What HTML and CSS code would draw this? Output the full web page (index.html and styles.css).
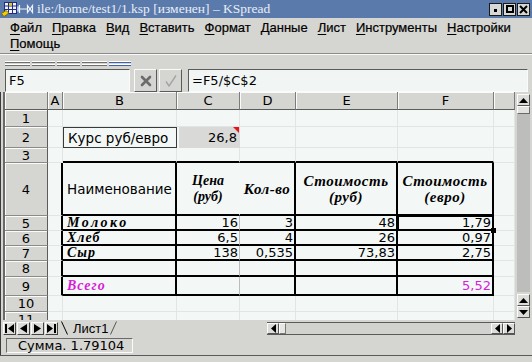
FILE: index.html
```html
<!DOCTYPE html>
<html>
<head>
<meta charset="utf-8">
<title>KSpread</title>
<link rel="stylesheet" href="styles.css">
</head>
<body>
<div class="win">
  <div class="titlebar">
    <svg class="ticon" width="16" height="16" viewBox="0 0 16 16">
      <rect x="3.5" y="1.5" width="12" height="11" fill="#f4f4f4" stroke="#1c2c8c"/>
      <path d="M3.5 5h12M3.5 8.5h12M7.5 1.5v11M11.5 1.5v11" stroke="#1c2c8c" fill="none"/>
      <rect x="8" y="2" width="3" height="2.5" fill="#f0c800"/>
      <path d="M0.5 12.5 L5 9.5 L8 12 L3 15.5 Z" fill="#f0d000" stroke="#7a5a00" stroke-width="0.8"/>
    </svg>
    <svg class="tpin" width="17" height="16" viewBox="0 0 17 16">
      <path d="M2.5 4v8M1 5.5v5M2.5 8h8" stroke="#f0f4fa" stroke-width="1.2" fill="none"/>
      <path d="M10.5 4.5 L15.5 11.5 L15.5 4.5 L10.5 11.5 Z" stroke="#f0f4fa" stroke-width="1.2" fill="none"/>
    </svg>
    <div class="ttext">ile:/home/test1/1.ksp [изменен] – KSpread</div>
    <div class="tbtns">
      <span class="tb"><span class="mini"></span></span>
      <span class="tb"><span class="maxi"></span></span>
      <span class="tb">
        <svg width="9" height="9" viewBox="0 0 9 9"><path d="M1 1L8 8M8 1L1 8" stroke="#000" stroke-width="2"/></svg>
      </span>
    </div>
  </div>

  <div class="menubar">
    <span><u>Ф</u>айл</span>
    <span><u>П</u>равка</span>
    <span><u>В</u>ид</span>
    <span><u>В</u>ставить</span>
    <span><u>Ф</u>ормат</span>
    <span><u>Д</u>анные</span>
    <span><u>Л</u>ист</span>
    <span><u>И</u>нструменты</span>
    <span><u>Н</u>астройки</span>
    <span class="brk"></span>
    <span><u>П</u>омощь</span>
  </div>
  <div class="sep"></div>

  <div class="handles">
    <div class="h w25"></div>
    <div class="h w23"></div>
    <div class="h w23"></div>
    <div class="h w25"></div>
    <div class="h w22 blue"></div>
  </div>

  <div class="formula">
    <div class="namebox">F5</div>
    <div class="fbtn">
      <svg width="14" height="14" viewBox="0 0 14 14"><path d="M3 3L11 11M11 3L3 11" stroke="#6c6c6c" stroke-width="2.6" stroke-linecap="round"/></svg>
    </div>
    <div class="fbtn">
      <svg width="14" height="14" viewBox="0 0 14 14"><path d="M2 7.5L5 12L12 1.5" stroke="#a4a4a4" stroke-width="1.4" fill="none"/></svg>
    </div>
    <div class="fedit">=F5/$C$2</div>
  </div>

  <div class="sheetwrap">
    <div class="sheet">
      <div class="ch"></div><div class="ch">A</div><div class="ch">B</div><div class="ch">C</div><div class="ch">D</div><div class="ch">E</div><div class="ch">F</div><div class="ch"></div>

      <div class="rh">1</div><div></div><div></div><div></div><div></div><div></div><div></div><div></div>

      <div class="rh">2</div><div></div><div class="kurs">Курс руб/евро</div><div class="rate">26,8<span class="tri"></span></div><div></div><div></div><div></div><div></div>

      <div class="rh">3</div><div></div><div class="B"></div><div class="B"></div><div class="B"></div><div class="B"></div><div class="B"></div><div></div>

      <div class="rh">4</div><div class="R"></div>
      <div class="R B lbl">Наименование</div>
      <div class="B nol hd sm">Цена<br>(руб)</div>
      <div class="R B hd vis">Кол-во</div>
      <div class="R B hd">Стоимость<br>(руб)</div>
      <div class="R B hd">Стоимость<br>(евро)</div>
      <div></div>

      <div class="rh">5</div><div class="R"></div>
      <div class="R B nm wide">Молоко</div>
      <div class="B gl num">16</div>
      <div class="R B num">3</div>
      <div class="R B num">48</div>
      <div class="R B num sel">1,79<span class="selbox"></span><span class="handle"></span></div>
      <div></div>

      <div class="rh">6</div><div class="R"></div>
      <div class="R B nm">Хлеб</div>
      <div class="B gl num">6,5</div>
      <div class="R B num">4</div>
      <div class="R B num">26</div>
      <div class="R B num">0,97</div>
      <div></div>

      <div class="rh">7</div><div class="R"></div>
      <div class="R B nm">Сыр</div>
      <div class="B gl num">138</div>
      <div class="R B num">0,535</div>
      <div class="R B num">73,83</div>
      <div class="R B num">2,75</div>
      <div></div>

      <div class="rh">8</div><div class="R"></div>
      <div class="R B"></div>
      <div class="B gl"></div>
      <div class="R B"></div>
      <div class="R B"></div>
      <div class="R B"></div>
      <div></div>

      <div class="rh">9</div><div class="R"></div>
      <div class="R B nm mag">Всего</div>
      <div class="B gl"></div>
      <div class="R B"></div>
      <div class="R B"></div>
      <div class="R B num mag">5,52</div>
      <div></div>

      <div class="rh">10</div><div></div><div></div><div></div><div></div><div></div><div></div><div></div>
      <div class="rh">11</div><div></div><div></div><div></div><div></div><div></div><div></div><div></div>
    </div>
    <div class="vscroll">
      <div class="sb"><svg width="9" height="5" viewBox="0 0 9 5"><path d="M0 5L4.5 0L9 5Z"/></svg></div>
      <div class="thumb"></div>
      <div class="trough"></div>
      <div class="sb"><svg width="9" height="5" viewBox="0 0 9 5"><path d="M0 5L4.5 0L9 5Z"/></svg></div>
      <div class="sb"><svg width="9" height="5" viewBox="0 0 9 5"><path d="M0 0L4.5 5L9 0Z"/></svg></div>
    </div>
  </div>

  <div class="tabrow">
    <div class="nav">
      <div class="nb"><svg width="9" height="9" viewBox="0 0 9 9"><path d="M0 0h2v9H0z M9 0L3 4.5L9 9Z"/></svg></div>
      <div class="nb"><svg width="9" height="9" viewBox="0 0 9 9"><path d="M8 0L1 4.5L8 9Z"/></svg></div>
      <div class="nb"><svg width="9" height="9" viewBox="0 0 9 9"><path d="M1 0L8 4.5L1 9Z"/></svg></div>
      <div class="nb"><svg width="9" height="9" viewBox="0 0 9 9"><path d="M0 0L6 4.5L0 9Z M7 0h2v9H7z"/></svg></div>
    </div>
    <div class="tab">
      <svg class="tabshape" width="58" height="14" viewBox="0 0 58 14"><path d="M0.5 0.5 L6.5 13.5" fill="none" stroke="#000"/><path d="M49.5 13.5 L55.5 0.5" fill="none" stroke="#555"/></svg>
      <span class="tabtext">Лист1</span>
    </div>
    <div class="hscroll">
      <div class="hb"><svg width="5" height="9" viewBox="0 0 5 9"><path d="M5 0L0 4.5L5 9Z"/></svg></div>
      <div class="hthumb"></div>
      <div class="htrough"></div>
      <div class="hb"><svg width="5" height="9" viewBox="0 0 5 9"><path d="M5 0L0 4.5L5 9Z"/></svg></div>
      <div class="hb"><svg width="5" height="9" viewBox="0 0 5 9"><path d="M0 0L5 4.5L0 9Z"/></svg></div>
    </div>
  </div>

  <div class="status">
    <div class="sbox">Сумма. 1.79104</div>
  </div>
  <div class="bottom"></div>
</div>
</body>
</html>
```

FILE: styles.css
```css
* { box-sizing: border-box; }

body {
  margin: 0;
  width: 532px;
  height: 362px;
  overflow: hidden;
  background: #d5d5d1;
  font-family: "Liberation Sans", Arial, sans-serif;
  color: #000;
}

.win {
  display: flex;
  flex-direction: column;
  height: 362px;
}

/* ---------- title bar ---------- */
.titlebar {
  height: 18px;
  flex: none;
  background: #5b7aac;
  display: flex;
  align-items: center;
  color: #e8eef6;
  padding-left: 1px;
}
.ticon, .tpin { flex: none; }
.ttext {
  font: 13.5px "Liberation Serif", serif;
  margin-left: 3px;
  white-space: nowrap;
  flex: 1;
  overflow: hidden;
}
.tbtns { display: flex; gap: 1px; margin-right: 2px; }
.tb {
  width: 13px;
  height: 13px;
  background: #d8d8d6;
  border: 1px solid #1a1a1a;
  display: flex;
  align-items: center;
  justify-content: center;
}
.mini { width: 3px; height: 3px; background: #000; margin-top: 3px; }
.maxi { width: 8px; height: 8px; border: 2px solid #000; }

/* ---------- menu ---------- */
.menubar {
  height: 35px;
  flex: none;
  padding: 2px 0 0 10px;
  display: flex;
  flex-wrap: wrap;
  align-content: flex-start;
  column-gap: 10px;
  font: 13px "Liberation Sans", Arial, sans-serif;
  line-height: 16px;
  -webkit-text-stroke: 0.2px #000;
}
.menubar u { text-decoration-thickness: 1px; text-underline-offset: 2px; }
.brk { flex-basis: 100%; height: 0; }
.sep {
  height: 2px;
  flex: none;
  border-top: 1px solid #8a8a88;
  border-bottom: 1px solid #fbfbfb;
}

/* ---------- toolbar handles ---------- */
.handles {
  height: 13px;
  flex: none;
  display: flex;
  align-items: flex-end;
  gap: 2px;
  padding: 0 0 2px 5px;
}
.h {
  height: 5px;
  background: linear-gradient(#fff 0 1px, #6e6e6e 1px 2px, transparent 2px 3px, #fff 3px 4px, #6e6e6e 4px 5px);
}
.h.blue {
  background: linear-gradient(#fff 0 1px, #4060b0 1px 2px, transparent 2px 3px, #fff 3px 4px, #4060b0 4px 5px);
}
.w25 { width: 25px; }
.w23 { width: 23px; }
.w22 { width: 22px; }

/* ---------- formula row ---------- */
.formula {
  height: 24px;
  flex: none;
  display: flex;
  padding: 1px 4px 0 5px;
  font: 13px "DejaVu Sans", sans-serif;
}
.namebox {
  width: 125px;
  background: #f1f6f5;
  border: 1px solid;
  border-color: #5a5a5a #fafafa #fafafa #5a5a5a;
  padding-left: 3px;
  display: flex;
  align-items: center;
}
.fbtn {
  width: 23px;
  margin-left: 4px;
  background: #d5d5d1;
  border: 1px solid;
  border-color: #fafafa #5a5a5a #5a5a5a #fafafa;
  display: flex;
  align-items: center;
  justify-content: center;
}
.fbtn + .fbtn { margin-left: 2px; }
.fedit {
  flex: 1;
  margin-left: 6px;
  background: #f1f6f5;
  border: 1px solid;
  border-color: #5a5a5a #fafafa #fafafa #5a5a5a;
  padding-left: 3px;
  display: flex;
  align-items: center;
}

/* ---------- sheet ---------- */
.sheetwrap {
  height: 228px;
  flex: none;
  display: flex;
  border-left: 1px solid #3c3c3c;
  padding-left: 2px;
}
.sheet {
  width: 512px;
  height: 228px;
  overflow: hidden;
  border-left: 2px solid #6a6a6a;
  background: #f3f8f7;
  display: grid;
  grid-template-columns: 43px 15px 114px 63px 56px 102px 96px 21px;
  grid-template-rows: 18px 17px 21px 15px 53px 15px 15px 15px 16px 19px 16px 16px;
  font: 13px "DejaVu Sans", sans-serif;
}
.sheet > div {
  border-right: 1px solid #e1e6e5;
  border-bottom: 1px solid #e1e6e5;
  display: flex;
  align-items: center;
  overflow: hidden;
  white-space: nowrap;
  position: relative;
}
.sheet > .ch {
  background: #d5d5d1;
  border-right: 1px solid #7c7c7a;
  border-bottom: 1px solid #5c5c5a;
  box-shadow: inset 1px 1px #fbfbfb;
  justify-content: center;
}
.sheet > .rh {
  background: #d5d5d1;
  border-right: 1px solid #5c5c5a;
  border-bottom: 1px solid #8a8a88;
  box-shadow: inset 1px 1px #fbfbfb;
  justify-content: center;
}
.sheet > .R { border-right: 2px solid #000; }
.sheet > .B { border-bottom: 2px solid #000; }
.sheet > .gl { border-right-color: #bcbcbc; }
.sheet > .nol { border-right-color: transparent; }

.sheet > .kurs {
  border: 1px solid #3a3a3a;
  padding-left: 4px;
  font-size: 13.5px;
}
.sheet > .rate {
  background: #d9dad8;
  margin-left: 2px;
  justify-content: flex-end;
  padding-right: 2px;
  border-right-color: transparent;
  border-bottom-color: transparent;
}
.tri {
  position: absolute;
  top: 0;
  right: 0;
  width: 0;
  height: 0;
  border-left: 6px solid transparent;
  border-top: 6px solid #e8141c;
}

.sheet > .lbl { padding-left: 4px; font-size: 13.5px; }
.sheet > .hd {
  flex-direction: column;
  justify-content: center;
  align-items: center;
  text-align: center;
  font: bold italic 15px "Liberation Serif", serif;
  letter-spacing: 0.5px;
  line-height: 16px;
}
.sheet > .hd.sm { font-size: 14px; letter-spacing: 0; }
.sheet > .vis { overflow: visible; z-index: 1; }

.sheet > .nm {
  font: bold italic 14px "Liberation Serif", serif;
  letter-spacing: 1px;
  padding-left: 4px;
}
.sheet > .wide { letter-spacing: 2.5px; }
.sheet > .num { justify-content: flex-end; padding-right: 1px; }
.sheet > .mag { color: #d81cd8; }

.sheet > .sel { overflow: visible; z-index: 2; }
.selbox {
  position: absolute;
  left: 0;
  top: 0;
  right: 0;
  bottom: 0;
  border-top: 1px solid #000;
  border-left: 1px solid #000;
  pointer-events: none;
}
.handle {
  position: absolute;
  right: -4px;
  bottom: -4px;
  width: 5px;
  height: 5px;
  background: #000;
}

/* ---------- vertical scrollbar ---------- */
.vscroll {
  width: 17px;
  flex: none;
  display: flex;
  flex-direction: column;
  padding: 2px;
  background: #d5d5d1;
}
.sb {
  height: 12px;
  flex: none;
  background: #dcdcd8;
  border: 1px solid;
  border-color: #fbfbfb #555 #555 #fbfbfb;
  display: flex;
  align-items: center;
  justify-content: center;
}
.thumb {
  height: 8px;
  flex: none;
  background: #e2e2de;
  border: 1px solid;
  border-color: #fbfbfb #6a6a6a #6a6a6a #fbfbfb;
}
.trough {
  flex: 1;
  background: #bdbdbb;
  margin-bottom: 2px;
}

/* ---------- tab row ---------- */
.tabrow {
  height: 15px;
  flex: none;
  display: flex;
  align-items: flex-end;
  border-left: 1px solid #3c3c3c;
  padding-left: 2px;
}
.nav { display: flex; gap: 1px; }
.nb {
  width: 13px;
  height: 13px;
  background: #dcdcd8;
  border: 1px solid;
  border-color: #fbfbfb #444 #444 #fbfbfb;
  display: flex;
  align-items: center;
  justify-content: center;
}
.tab {
  position: relative;
  width: 58px;
  height: 14px;
  margin-left: 3px;
  display: flex;
  align-items: center;
  padding-left: 12px;
}
.tabshape { position: absolute; left: 0; top: 0; }
.tabtext {
  position: relative;
  font: 13px "Liberation Sans", Arial, sans-serif;
  line-height: 13px;
}
.hscroll {
  display: flex;
  width: 248px;
  height: 13px;
  margin-left: auto;
  margin-right: 17px;
  border-top: 1px solid #5a5a5a;
  border-bottom: 1px solid #5a5a5a;
}
.hb {
  width: 12px;
  flex: none;
  background: #dcdcd8;
  border: 1px solid;
  border-color: #fbfbfb #555 #555 #fbfbfb;
  display: flex;
  align-items: center;
  justify-content: center;
}
.hthumb {
  width: 7px;
  flex: none;
  background: #e6e6e2;
  border: 1px solid;
  border-color: #fbfbfb #777 #777 #fbfbfb;
}
.htrough { flex: 1; background: #d2d2ce; }

/* ---------- status ---------- */
.status {
  height: 20px;
  flex: none;
  display: flex;
  padding: 3px 0 2px 5px;
  border-left: 1px solid #3c3c3c;
}
.sbox {
  width: 127px;
  border: 1px solid;
  border-color: #6a6a6a #fbfbfb #fbfbfb #6a6a6a;
  padding-left: 11px;
  font: 13px "DejaVu Sans", sans-serif;
  line-height: 13px;
  display: flex;
  align-items: center;
  white-space: nowrap;
}
.bottom {
  flex: 1;
  border-top: 1px solid #5a5a5a;
  background: #d5d5d1;
}
```
